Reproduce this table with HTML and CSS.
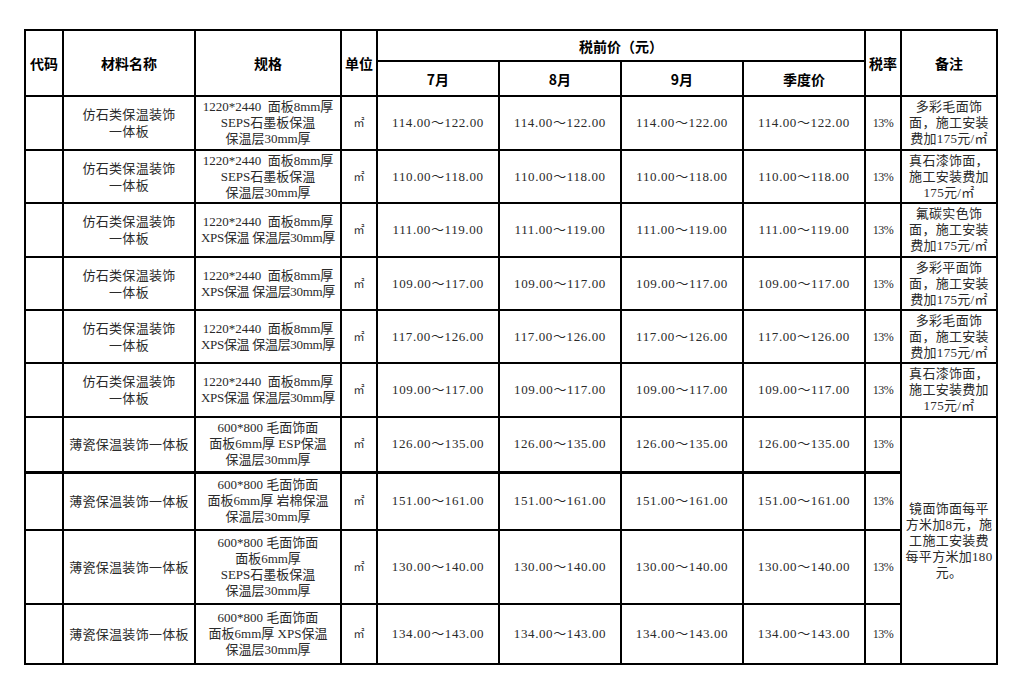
FILE: index.html
```html
<!DOCTYPE html>
<html lang="zh-CN">
<head>
<meta charset="utf-8">
<title>材料价格表</title>
<link rel="stylesheet" href="styles.css">
</head>
<body>
<table class="price-table">
  <colgroup>
    <col class="c-code"><col class="c-name"><col class="c-spec"><col class="c-unit">
    <col class="c-price"><col class="c-price"><col class="c-price"><col class="c-price">
    <col class="c-tax"><col class="c-note">
  </colgroup>
  <thead>
    <tr class="h1">
      <th rowspan="2">代码</th>
      <th rowspan="2">材料名称</th>
      <th rowspan="2">规格</th>
      <th rowspan="2">单位</th>
      <th colspan="4">税前价（元）</th>
      <th rowspan="2">税率</th>
      <th rowspan="2">备注</th>
    </tr>
    <tr class="h2">
      <th>7月</th><th>8月</th><th>9月</th><th>季度价</th>
    </tr>
  </thead>
  <tbody>
    <tr class="r54">
      <td></td>
      <td class="name">仿石类保温装饰<br>一体板</td>
      <td class="spec">1220*2440&nbsp; 面板8mm厚<br>SEPS石墨板保温<br>保温层30mm厚</td>
      <td class="unit">㎡</td>
      <td class="num">114.00～122.00</td><td class="num">114.00～122.00</td><td class="num">114.00～122.00</td><td class="num">114.00～122.00</td>
      <td class="tax">13%</td>
      <td class="note">多彩毛面饰<br>面，施工安装<br>费加175元/㎡</td>
    </tr>
    <tr class="r53">
      <td></td>
      <td class="name">仿石类保温装饰<br>一体板</td>
      <td class="spec">1220*2440&nbsp; 面板8mm厚<br>SEPS石墨板保温<br>保温层30mm厚</td>
      <td class="unit">㎡</td>
      <td class="num">110.00～118.00</td><td class="num">110.00～118.00</td><td class="num">110.00～118.00</td><td class="num">110.00～118.00</td>
      <td class="tax">13%</td>
      <td class="note">真石漆饰面，<br>施工安装费加<br>175元/㎡</td>
    </tr>
    <tr class="r54">
      <td></td>
      <td class="name">仿石类保温装饰<br>一体板</td>
      <td class="spec">1220*2440&nbsp; 面板8mm厚<br><span class="tight">XPS保温 保温层30mm厚</span></td>
      <td class="unit">㎡</td>
      <td class="num">111.00～119.00</td><td class="num">111.00～119.00</td><td class="num">111.00～119.00</td><td class="num">111.00～119.00</td>
      <td class="tax">13%</td>
      <td class="note">氟碳实色饰<br>面，施工安装<br>费加175元/㎡</td>
    </tr>
    <tr class="r53">
      <td></td>
      <td class="name">仿石类保温装饰<br>一体板</td>
      <td class="spec">1220*2440&nbsp; 面板8mm厚<br><span class="tight">XPS保温 保温层30mm厚</span></td>
      <td class="unit">㎡</td>
      <td class="num">109.00～117.00</td><td class="num">109.00～117.00</td><td class="num">109.00～117.00</td><td class="num">109.00～117.00</td>
      <td class="tax">13%</td>
      <td class="note">多彩平面饰<br>面，施工安装<br>费加175元/㎡</td>
    </tr>
    <tr class="r53">
      <td></td>
      <td class="name">仿石类保温装饰<br>一体板</td>
      <td class="spec">1220*2440&nbsp; 面板8mm厚<br><span class="tight">XPS保温 保温层30mm厚</span></td>
      <td class="unit">㎡</td>
      <td class="num">117.00～126.00</td><td class="num">117.00～126.00</td><td class="num">117.00～126.00</td><td class="num">117.00～126.00</td>
      <td class="tax">13%</td>
      <td class="note">多彩毛面饰<br>面，施工安装<br>费加175元/㎡</td>
    </tr>
    <tr class="r54">
      <td></td>
      <td class="name">仿石类保温装饰<br>一体板</td>
      <td class="spec">1220*2440&nbsp; 面板8mm厚<br><span class="tight">XPS保温 保温层30mm厚</span></td>
      <td class="unit">㎡</td>
      <td class="num">109.00～117.00</td><td class="num">109.00～117.00</td><td class="num">109.00～117.00</td><td class="num">109.00～117.00</td>
      <td class="tax">13%</td>
      <td class="note">真石漆饰面，<br>施工安装费加<br>175元/㎡</td>
    </tr>
    <tr class="r55">
      <td></td>
      <td class="name">薄瓷保温装饰一体板</td>
      <td class="spec">600*800 毛面饰面<br>面板6mm厚 ESP保温<br>保温层30mm厚</td>
      <td class="unit">㎡</td>
      <td class="num">126.00～135.00</td><td class="num">126.00～135.00</td><td class="num">126.00～135.00</td><td class="num">126.00～135.00</td>
      <td class="tax">13%</td>
      <td class="note" rowspan="4">镜面饰面每平<br>方米加8元，施<br>工施工安装费<br>每平方米加180<br>元。</td>
    </tr>
    <tr class="r58 break">
      <td></td>
      <td class="name">薄瓷保温装饰一体板</td>
      <td class="spec">600*800 毛面饰面<br>面板6mm厚 岩棉保温<br>保温层30mm厚</td>
      <td class="unit">㎡</td>
      <td class="num">151.00～161.00</td><td class="num">151.00～161.00</td><td class="num">151.00～161.00</td><td class="num">151.00～161.00</td>
      <td class="tax">13%</td>
    </tr>
    <tr class="r74">
      <td></td>
      <td class="name">薄瓷保温装饰一体板</td>
      <td class="spec">600*800 毛面饰面<br>面板6mm厚<br>SEPS石墨板保温<br>保温层30mm厚</td>
      <td class="unit">㎡</td>
      <td class="num">130.00～140.00</td><td class="num">130.00～140.00</td><td class="num">130.00～140.00</td><td class="num">130.00～140.00</td>
      <td class="tax">13%</td>
    </tr>
    <tr class="r60">
      <td></td>
      <td class="name">薄瓷保温装饰一体板</td>
      <td class="spec">600*800 毛面饰面<br>面板6mm厚 XPS保温<br>保温层30mm厚</td>
      <td class="unit">㎡</td>
      <td class="num">134.00～143.00</td><td class="num">134.00～143.00</td><td class="num">134.00～143.00</td><td class="num">134.00～143.00</td>
      <td class="tax">13%</td>
    </tr>
  </tbody>
</table>
</body>
</html>
```

FILE: styles.css
```css
html, body {
  margin: 0;
  padding: 0;
  background: #fff;
}

body {
  padding: 29px 0 0 24px;
}

.price-table {
  border-collapse: collapse;
  table-layout: fixed;
  width: 974px;
  font-family: "Liberation Serif", "Noto Sans CJK SC", serif;
  font-size: 13px;
  line-height: 16px;
  color: #2a2a2a;
}

.c-code { width: 38px; }
.c-name { width: 132px; }
.c-spec { width: 146px; }
.c-unit { width: 36px; }
.c-price { width: 122px; }
.c-tax { width: 36px; }
.c-note { width: 96px; }

.price-table th,
.price-table td {
  border: 2px solid #000;
  padding: 0 1px;
  text-align: center;
  vertical-align: middle;
  overflow: hidden;
  white-space: nowrap;
}

.price-table th {
  font-family: "Noto Sans CJK SC", "Liberation Sans", sans-serif;
  font-weight: 700;
  font-size: 14px;
  color: #000;
}

.h1 { height: 31px; }
.h2 { height: 35px; }

.r53 { height: 53px; }
.r54 { height: 54px; }
.r55 { height: 55px; }
.r58 { height: 58px; }
.r60 { height: 60px; }
.r74 { height: 74px; }

.break td { border-top-width: 3px; }

.name,
.note {
  letter-spacing: 0.3px;
}

.spec {
  letter-spacing: 0;
}

.tight {
  letter-spacing: -0.3px;
}

.name { line-height: 17px; }

.num {
  letter-spacing: 0.6px;
}

.unit {
  font-size: 11px;
}

.tax {
  font-size: 12px;
  letter-spacing: -0.5px;
}
```
